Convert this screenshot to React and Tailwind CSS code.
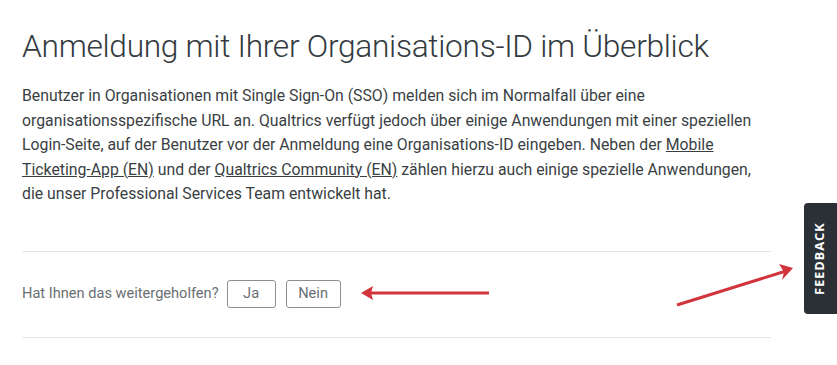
import React from "react";

export default function App() {
  return (
    <div className="relative w-[837px] h-[365px] bg-white overflow-hidden" style={{ fontFamily: "Roboto, 'Liberation Sans', sans-serif" }}>
      <div className="w-[749px] ml-[22px] pt-[27px]">
        <h1 className="text-[31.7px] leading-[40px] font-light text-[#333a40] tracking-[-0.3px] whitespace-nowrap">
          Anmeldung mit Ihrer Organisations-ID im Überblick
        </h1>
        <p className="mt-[17px] w-[780px] text-[15.8px] leading-[24.5px] text-[#3a3f44]">
          Benutzer in Organisationen mit Single Sign-On (SSO) melden sich im Normalfall über eine<br />
          organisationsspezifische URL an. Qualtrics verfügt jedoch über einige Anwendungen mit einer speziellen<br />
          Login-Seite, auf der Benutzer vor der Anmeldung eine Organisations-ID eingeben. Neben der{" "}
          <a className="underline">Mobile</a><br />
          <a className="underline">Ticketing-App (EN)</a> und der{" "}
          <a className="underline">Qualtrics Community (EN)</a> zählen hierzu auch einige spezielle Anwendungen,<br />
          die unser Professional Services Team entwickelt hat.
        </p>
        <div className="mt-[44px] border-t border-[#e6e6e6]" />
        <div className="flex items-center h-[86px] border-b border-[#e6e6e6]">
          <span className="text-[14.6px] text-[#6a6f73]">Hat Ihnen das weitergeholfen?</span>
          <button className="ml-[8px] w-[49px] h-[28px] border border-[#8a8f93] rounded-[3px] text-[14.6px] text-[#6a6f73]">Ja</button>
          <button className="ml-[10px] w-[55px] h-[28px] border border-[#8a8f93] rounded-[3px] text-[14.6px] text-[#6a6f73]">Nein</button>
        </div>
      </div>

      <svg className="absolute left-0 top-0 pointer-events-none" width="837" height="365">
        <line x1="489" y1="293" x2="368" y2="293" stroke="#d2343c" strokeWidth="3" />
        <polygon points="361,293 373,286 371,293 373,300" fill="#d2343c" />
        <line x1="677" y1="305" x2="786" y2="271" stroke="#d2343c" strokeWidth="3" />
        <polygon points="793,268 779,264 784,272 782,280" fill="#d2343c" />
      </svg>

      <div className="absolute right-0 top-[203px] w-[33px] h-[111px] bg-[#2a3036] rounded-l-[4px] flex items-center justify-center">
        <span className="-rotate-90 whitespace-nowrap text-white font-bold text-[13px] tracking-[0.8px]" style={{ fontFamily: "'Open Sans', sans-serif" }}>FEEDBACK</span>
      </div>
    </div>
  );
}
